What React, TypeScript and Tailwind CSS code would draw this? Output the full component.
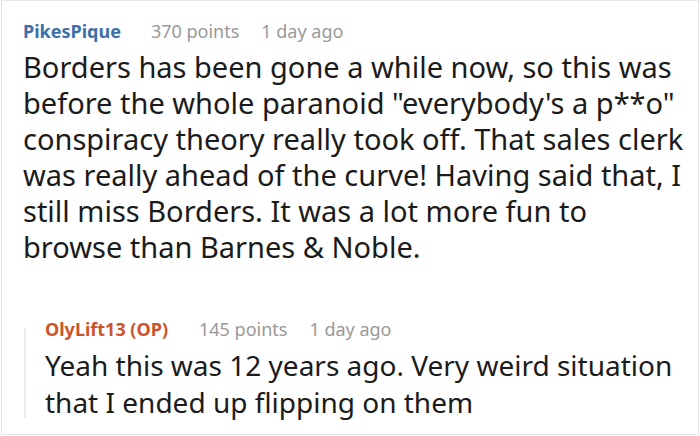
import React from "react";

export default function App() {
  return (
    <div className="w-[700px] h-[436px] bg-white overflow-hidden" style={{ fontFamily: '"Noto Sans", sans-serif' }}>
      <div className="w-[698px] h-[435px] border border-[#e6e6e6] ml-px pl-[21px] pr-2 pt-[16px]">
        <div className="flex items-baseline text-[18px] leading-[28px]">
          <span className="font-bold text-[#3e6eaa]">PikesPique</span>
          <span className="ml-[30px] text-[#999]">370 points</span>
          <span className="ml-[22px] text-[#999]">1 day ago</span>
        </div>
        <p className="text-[29px] leading-[36px] text-[#1b1b1b] mt-[4px]">
          Borders has been gone a while now, so this was before the whole paranoid "everybody's a p**o" conspiracy theory really took off. That sales clerk was really ahead of the curve! Having said that, I still miss Borders. It was a lot more fun to browse than Barnes &amp; Noble.
        </p>
        <div className="mt-[50px] flex">
          <div className="w-[2px] bg-[#ececec] ml-px mt-[13px] mb-[3px]" />
          <div className="pl-[19px] min-w-0 flex-1">
            <div className="flex items-baseline text-[18px] leading-[28px]">
              <span className="font-bold text-[#c9552c]">OlyLift13 (OP)</span>
              <span className="ml-[31px] text-[#999]">145 points</span>
              <span className="ml-[22px] text-[#999]">1 day ago</span>
            </div>
            <p className="text-[28px] leading-[37px] text-[#1b1b1b] mt-[4px]">
              Yeah this was 12 years ago. Very weird situation that I ended up flipping on them
            </p>
          </div>
        </div>
      </div>
    </div>
  );
}
